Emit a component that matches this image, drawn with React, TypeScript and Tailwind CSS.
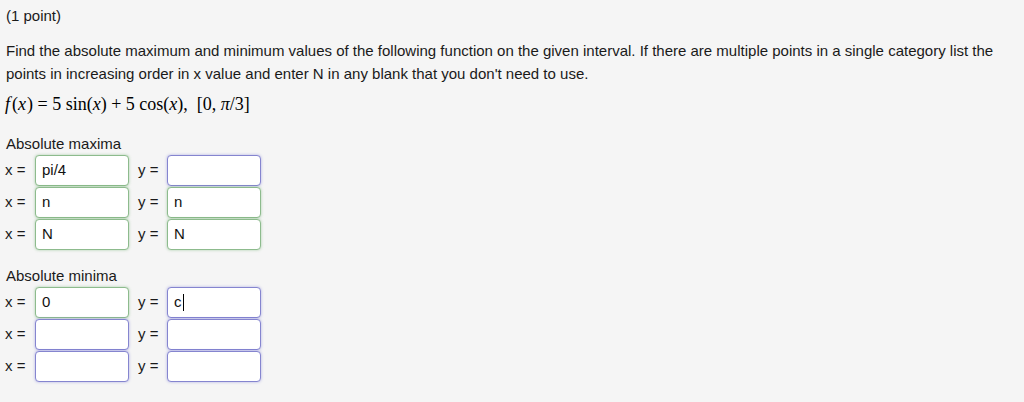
import React from 'react';

type Status = 'ok' | 'empty';

interface Row {
  x: string;
  xs: Status;
  y: string;
  ys: Status;
  caret?: boolean;
}

const maxima: Row[] = [
  { x: 'pi/4', xs: 'ok', y: '', ys: 'empty' },
  { x: 'n', xs: 'ok', y: 'n', ys: 'ok' },
  { x: 'N', xs: 'ok', y: 'N', ys: 'ok' },
];

const minima: Row[] = [
  { x: '0', xs: 'ok', y: 'c', ys: 'empty', caret: true },
  { x: '', xs: 'empty', y: '', ys: 'empty' },
  { x: '', xs: 'empty', y: '', ys: 'empty' },
];

function Field({ value, status, caret }: { value: string; status: Status; caret?: boolean }) {
  const border =
    status === 'ok'
      ? 'border-[#8dbb8d] shadow-[0_0_3px_rgba(80,160,80,0.45)]'
      : 'border-[#8585cf] shadow-[0_0_3px_rgba(90,90,210,0.45)]';
  return (
    <div
      className={`w-[94px] h-[31px] bg-white rounded-[4px] border flex items-center pl-[6px] text-[15px] text-[#111] ${border}`}
    >
      <span>{value}</span>
      {caret && <span className="inline-block w-px h-[17px] bg-black ml-px" />}
    </div>
  );
}

function Group({ title, rows }: { title: string; rows: Row[] }) {
  return (
    <div>
      <div className="h-[20px] leading-[20px] pl-[6px]">{title}</div>
      <div className="flex flex-col gap-[1px] mt-[1px]">
        {rows.map((r, i) => (
          <div key={i} className="flex items-center h-[31px] pl-[5px]">
            <span className="w-[30px]">x =</span>
            <Field value={r.x} status={r.xs} />
            <span className="w-[29px] ml-[9px]">y =</span>
            <Field value={r.y} status={r.ys} caret={r.caret} />
          </div>
        ))}
      </div>
    </div>
  );
}

export default function App() {
  return (
    <div
      className="w-[1024px] h-[402px] bg-[#f5f5f5] text-[15px] text-[#1a1a1a] overflow-hidden"
      style={{ fontFamily: '"Liberation Sans", Arial, sans-serif' }}
    >
      <div className="pl-[6px] pt-[6px] h-[20px] leading-[20px] box-content">(1 point)</div>

      <p className="pl-[6px] mt-[13px] leading-[23px] whitespace-nowrap">
        Find the absolute maximum and minimum values of the following function on the given interval. If there are
        multiple points in a single category list the
        <br />
        points in increasing order in x value and enter N in any blank that you don't need to use.
      </p>

      <div
        className="pl-[5px] mt-[7px] h-[24px] leading-[24px] text-[18px] text-black"
        style={{ fontFamily: '"Liberation Serif", "Times New Roman", serif' }}
      >
        <i className="pr-[2px]">f</i>(<i className="pr-[1px]">x</i>) = 5 sin(<i>x</i>) + 5 cos(<i>x</i>),&nbsp; [0,{' '}
        <i>π</i>/3]
      </div>

      <div className="mt-[18px]">
        <Group title="Absolute maxima" rows={maxima} />
      </div>
      <div className="mt-[16px]">
        <Group title="Absolute minima" rows={minima} />
      </div>
    </div>
  );
}
